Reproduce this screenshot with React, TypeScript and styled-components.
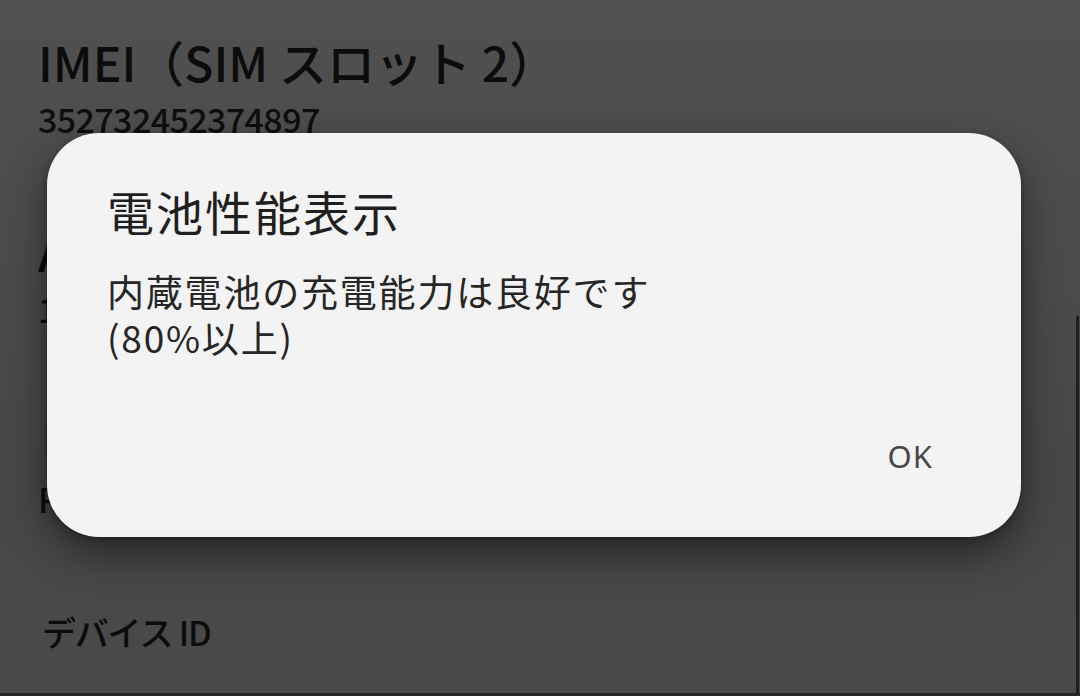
import React from 'react';
import styled, { createGlobalStyle } from 'styled-components';

const GlobalStyle = createGlobalStyle`
  html, body {
    margin: 0;
    padding: 0;
    background: #4b4b4b;
  }
  body {
    font-family: "Noto Sans CJK JP", "Noto Sans", sans-serif;
  }
`;

interface InfoItem {
  title: string;
  value?: string;
  size: 'large' | 'small';
}

const items: InfoItem[] = [
  { title: 'IMEI（SIM スロット 2）', value: '352732452374897', size: 'large' },
  { title: 'Android バージョン', value: '13', size: 'large' },
  { title: 'ビルド番号', value: 'P1.0.0', size: 'large' },
  { title: 'デバイス ID', size: 'small' },
];

const App: React.FC = () => (
  <>
    <GlobalStyle />
    <Screen>
      <List>
        {items.map((item) => (
          <Row key={item.title} size={item.size}>
            <RowTitle size={item.size}>{item.title}</RowTitle>
            {item.value && <RowValue>{item.value}</RowValue>}
          </Row>
        ))}
      </List>

      <ScrollEdge />

      <Dialog>
        <DialogTitle>電池性能表示</DialogTitle>
        <DialogBody>
          内蔵電池の充電能力は良好です
          <br />
          (80%以上)
        </DialogBody>
        <DialogActions>
          <TextButton>OK</TextButton>
        </DialogActions>
      </Dialog>
    </Screen>
  </>
);

const Screen = styled.div`
  position: relative;
  width: 1080px;
  height: 696px;
  overflow: hidden;
  box-sizing: border-box;
  background: linear-gradient(180deg, #505050 0%, #474747 70%, #4a4a4a 100%);
  border-bottom: 3px solid #262626;
`;

const List = styled.div`
  display: flex;
  flex-direction: column;
  padding: 30px 0 0 38px;
`;

const Row = styled.div<{ size: 'large' | 'small' }>`
  display: flex;
  flex-direction: column;
  height: ${(p) => (p.size === 'large' ? '190px' : '80px')};
  padding: ${(p) => (p.size === 'large' ? '0' : '9px 0 0 4px')};
`;

const RowTitle = styled.div<{ size: 'large' | 'small' }>`
  color: #0c0c0c;
  font-weight: 500;
  font-size: ${(p) => (p.size === 'large' ? '48px' : '34px')};
  line-height: ${(p) => (p.size === 'large' ? '62px' : '46px')};
  letter-spacing: ${(p) => (p.size === 'large' ? '0' : '-1.2px')};
  white-space: nowrap;
`;

const RowValue = styled.div`
  margin-top: 7px;
  color: #0e0e0e;
  font-weight: 500;
  font-size: 34px;
  line-height: 40px;
  letter-spacing: -0.6px;
`;

const ScrollEdge = styled.div`
  position: absolute;
  right: 1px;
  top: 316px;
  bottom: 0;
  width: 3px;
  background: #1e1e1e;
`;

const Dialog = styled.div`
  position: absolute;
  left: 47px;
  top: 133px;
  width: 974px;
  height: 404px;
  box-sizing: border-box;
  display: flex;
  flex-direction: column;
  padding: 46px 88px 63px 60px;
  background: #f3f3f3;
  border-radius: 52px;
  box-shadow: 0 18px 40px rgba(0, 0, 0, 0.45), 0 2px 6px rgba(0, 0, 0, 0.3);
`;

const DialogTitle = styled.div`
  color: #1f1f1f;
  font-size: 47px;
  line-height: 64px;
  letter-spacing: 2px;
`;

const DialogBody = styled.div`
  margin-top: 25px;
  color: #262626;
  font-size: 37px;
  line-height: 46px;
  letter-spacing: 1.8px;
`;

const DialogActions = styled.div`
  margin-top: auto;
  display: flex;
  justify-content: flex-end;
`;

const TextButton = styled.button`
  border: none;
  background: transparent;
  padding: 0;
  color: #474747;
  font-family: "Noto Sans", sans-serif;
  font-size: 31px;
  line-height: 36px;
  letter-spacing: 1px;
  cursor: pointer;
`;

export default App;
